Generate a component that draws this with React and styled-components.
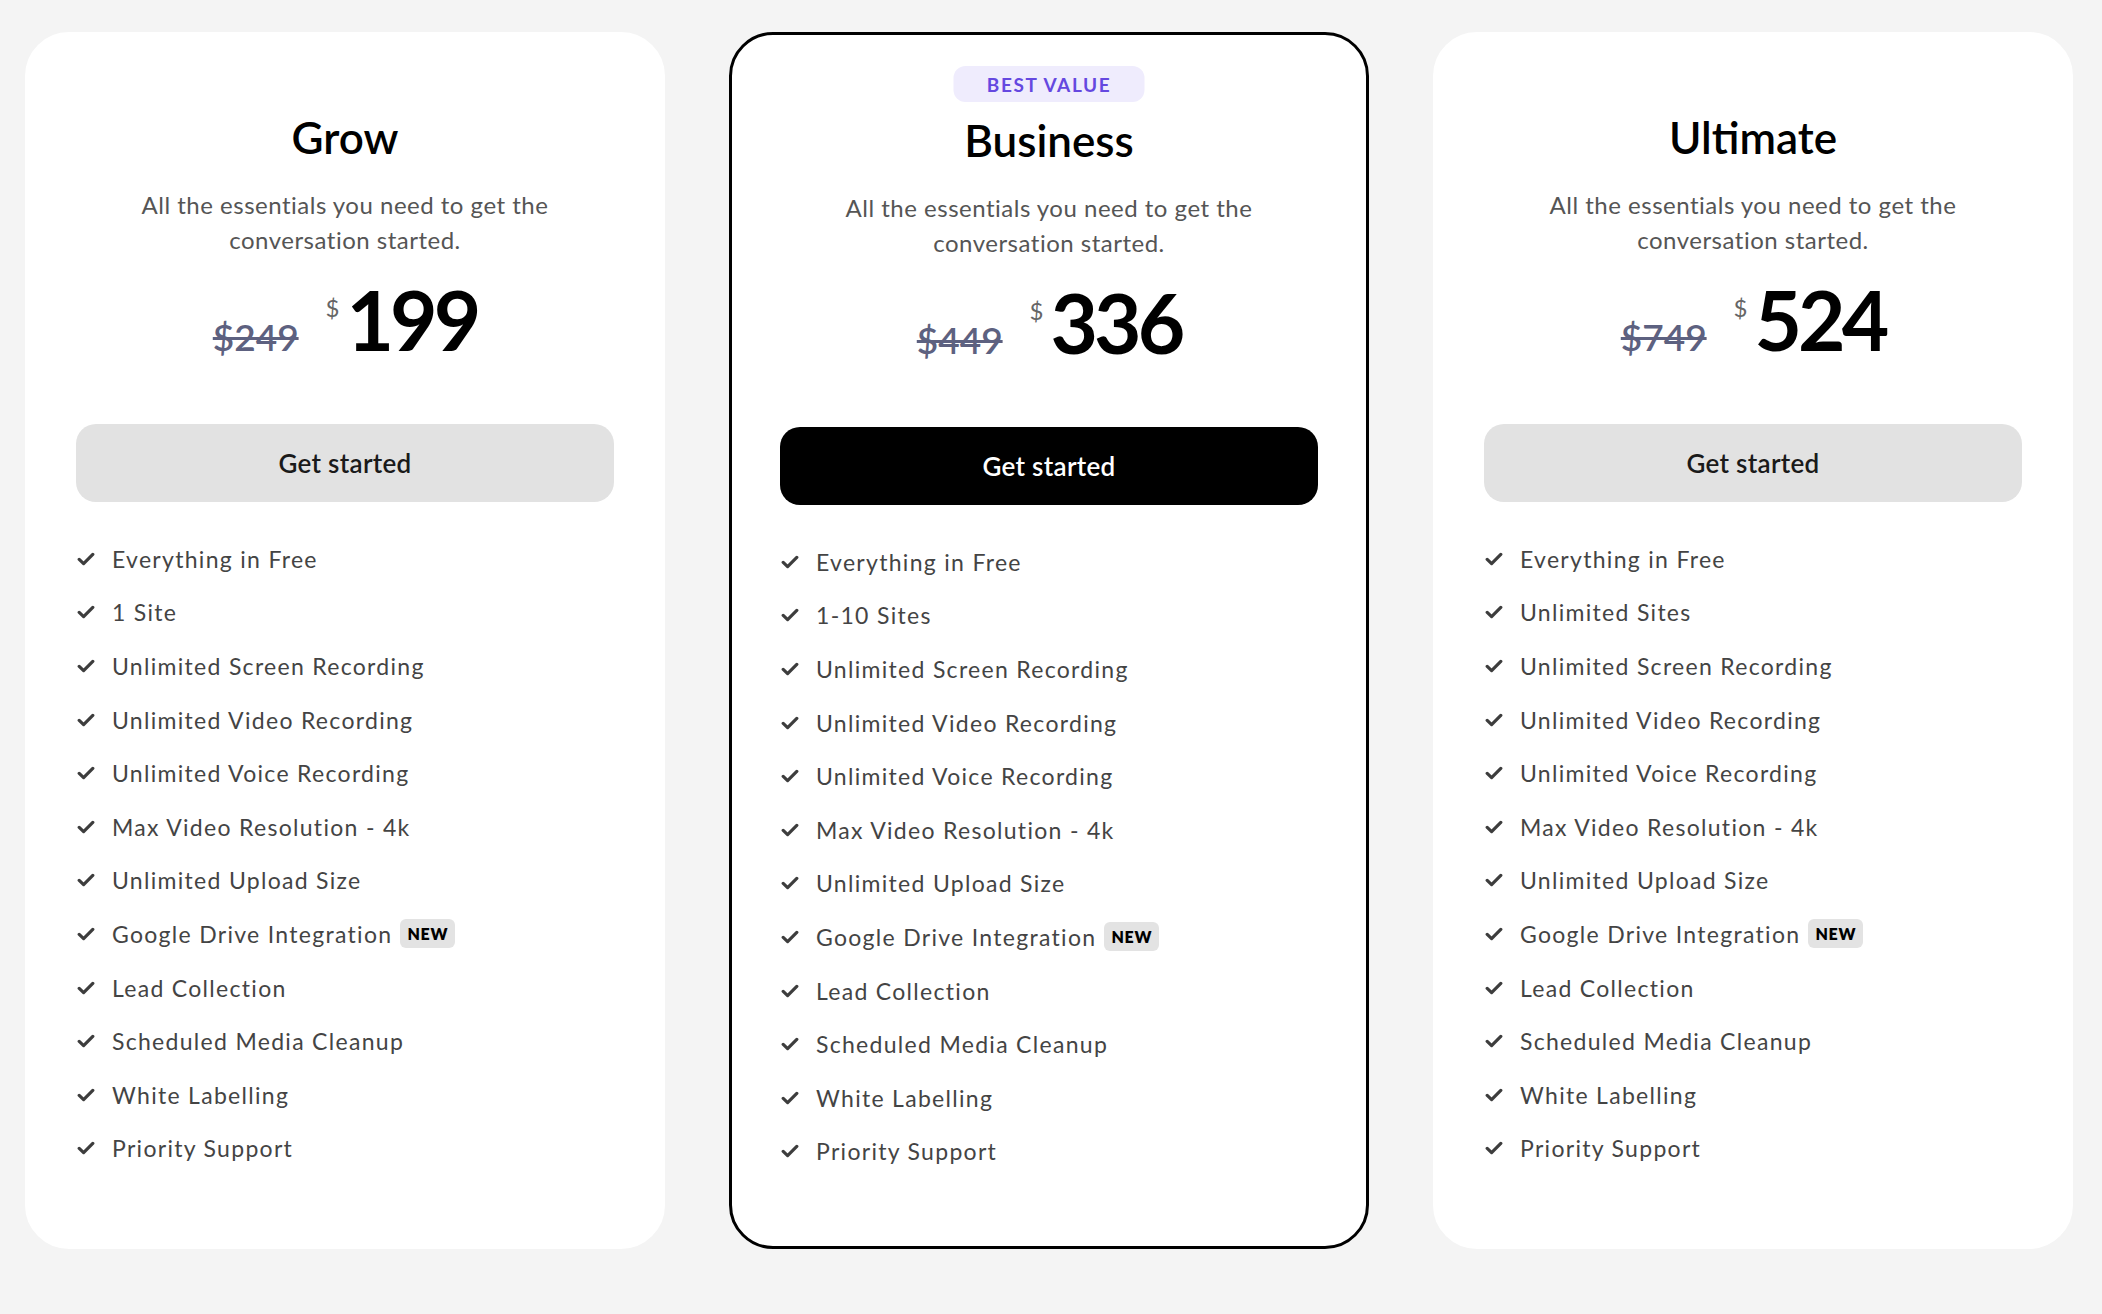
import React from 'react'
import styled, {createGlobalStyle} from "styled-components";

const GlobalStyle = createGlobalStyle`
  body {
    margin: 0;
    background: #f4f4f4;
    font-family: Lato, "Open Sans", sans-serif;
  }
`;

const features = [
  "Everything in Free",
  null, // sites row, differs per plan
  "Unlimited Screen Recording",
  "Unlimited Video Recording",
  "Unlimited Voice Recording",
  "Max Video Resolution - 4k",
  "Unlimited Upload Size",
  "Google Drive Integration",
  "Lead Collection",
  "Scheduled Media Cleanup",
  "White Labelling",
  "Priority Support",
];

const plans = [
  {id: 1, name: "Grow", old: "$249", price: "199", sites: "1 Site"},
  {id: 2, name: "Business", old: "$449", price: "336", sites: "1-10 Sites", featured: true},
  {id: 3, name: "Ultimate", old: "$749", price: "524", sites: "Unlimited Sites"},
];

function Check() {
  return (
    <svg width="18" height="14" viewBox="0 0 18 14" fill="none">
      <path d="M2.2 7.4 L6.6 11.6 L15.8 2.4" stroke="#3d3d3d" strokeWidth="3.2" strokeLinecap="round" strokeLinejoin="round" />
    </svg>
  );
}

export default function App() {
  return (
    <>
      <GlobalStyle />
      <Page>
        {plans.map((plan) => (
          <Card $featured={plan.featured} key={plan.id}>
            {plan.featured && <Badge>BEST VALUE</Badge>}
            <Title>{plan.name}</Title>
            <Desc>All the essentials you need to get the conversation started.</Desc>
            <PriceRow>
              <OldPrice>{plan.old}</OldPrice>
              <Currency>$</Currency>
              <Amount>{plan.price}</Amount>
            </PriceRow>
            <Button $dark={plan.featured}>Get started</Button>
            <FeatureList>
              {features.map((f, i) => (
                <Feature key={i}>
                  <Check />
                  <span>{f || plan.sites}</span>
                  {f === "Google Drive Integration" && <NewTag>NEW</NewTag>}
                </Feature>
              ))}
            </FeatureList>
          </Card>
        ))}
      </Page>
    </>
  );
}

const Page = styled.div`
  display: flex;
  align-items: flex-start;
  gap: 64px;
  padding: 32px 29px 40px 25px;
`;

const Card = styled.div`
  position: relative;
  box-sizing: border-box;
  width: 640px;
  flex-shrink: 0;
  background: #fff;
  border-radius: 44px;
  border: 3px solid ${(p) => (p.$featured ? "#000" : "#fff")};
  padding: ${(p) => (p.$featured ? "83px 48px 68px" : "80px 48px 71px")};
`;

const Badge = styled.div`
  position: absolute;
  top: 31px;
  left: 50%;
  transform: translateX(-50%);
  width: 191px;
  height: 36px;
  border-radius: 12px;
  background: #efecfd;
  color: #6548e0;
  font-size: 19px;
  font-weight: 700;
  letter-spacing: 1.6px;
  display: flex;
  align-items: center;
  justify-content: center;
`;

const Title = styled.h2`
  margin: 0;
  font-size: 44px;
  line-height: 44px;
  font-weight: 600;
  color: #000;
  text-align: center;
`;

const Desc = styled.p`
  margin: 28px auto 0;
  max-width: 440px;
  font-size: 24px;
  line-height: 35px;
  letter-spacing: 0.5px;
  color: #555;
  text-align: center;
`;

const PriceRow = styled.div`
  display: flex;
  justify-content: center;
  align-items: baseline;
  margin-top: 21px;
  height: 82px;
`;

const OldPrice = styled.span`
  font-size: 37px;
  font-weight: 600;
  color: #5d6180;
  text-decoration: line-through;
  margin-right: 27px;
`;

const Currency = styled.span`
  align-self: flex-start;
  margin-top: 18px;
  margin-right: 7px;
  font-size: 24px;
  line-height: 24px;
  color: #666;
`;

const Amount = styled.span`
  font-size: 82px;
  line-height: 82px;
  font-weight: 700;
  color: #000;
  letter-spacing: -4px;
`;

const Button = styled.button`
  display: block;
  width: 100%;
  height: 78px;
  margin-top: 64px;
  border: none;
  border-radius: 20px;
  background: ${(p) => (p.$dark ? "#000" : "#e2e2e2")};
  color: ${(p) => (p.$dark ? "#fff" : "#1a1a1a")};
  font-family: inherit;
  font-size: 26px;
  font-weight: 600;
  letter-spacing: 0.3px;
  cursor: pointer;
`;

const FeatureList = styled.ul`
  list-style: none;
  margin: 30px 0 0;
  padding: 0;
`;

const Feature = styled.li`
  display: flex;
  align-items: center;
  height: 53.6px;
  padding-left: 1px;
  gap: 17px;
  font-size: 23px;
  letter-spacing: 1.3px;
  color: #444;
`;

const NewTag = styled.span`
  display: inline-flex;
  align-items: center;
  height: 29px;
  padding: 0 7px;
  margin-left: -9px;
  border-radius: 6px;
  background: #e3e3e3;
  color: #000;
  font-size: 16px;
  font-weight: 800;
  letter-spacing: 0.8px;
`;
